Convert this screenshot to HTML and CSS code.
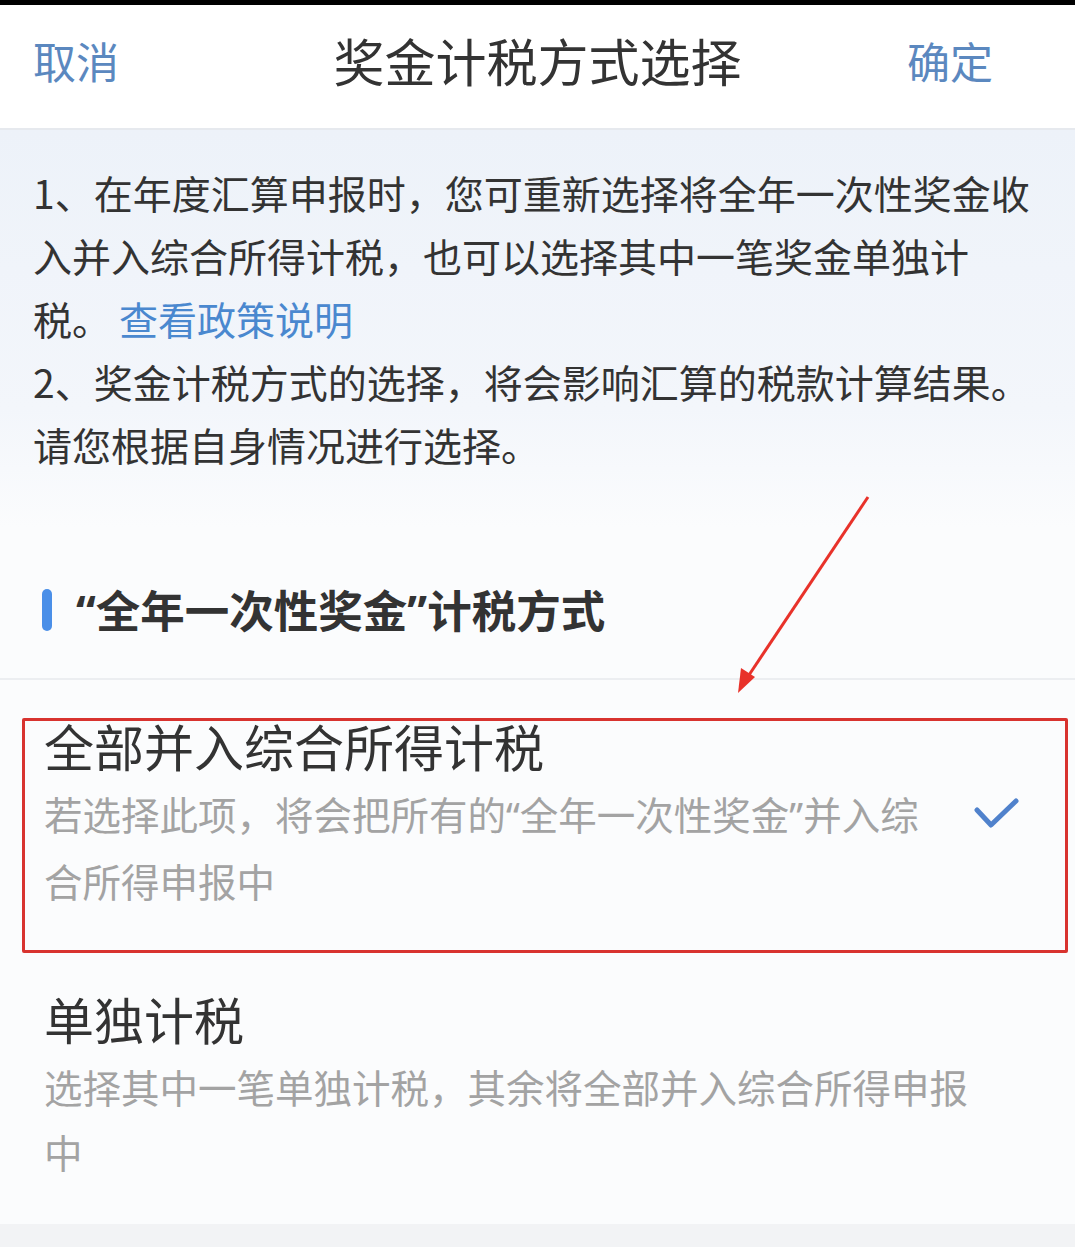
FILE: index.html
```html
<!DOCTYPE html>
<html lang="zh-CN">

<head>
    <meta charset="UTF-8">
    <meta name="viewport" content="width=device-width, initial-scale=1.0">
    <title>奖金计税方式选择</title>
    <link rel="stylesheet" href="styles.css">
</head>

<body>
    <div class="status"></div>

    <div class="header">
        <span class="action">取消</span>
        <h1 class="title">奖金计税方式选择</h1>
        <span class="action right">确定</span>
    </div>

    <div class="notice">
        <p>1、在年度汇算申报时，您可重新选择将全年一次性奖金收入并入综合所得计税，也可以选择其中一笔奖金单独计税。<a class="link">查看政策说明</a></p>
        <p>2、奖金计税方式的选择，将会影响汇算的税款计算结果。请您根据自身情况进行选择。</p>
    </div>

    <div class="section-title">
        <span class="bar"></span>
        <h2><span class="q">“</span>全年一次性奖金<span class="q">”</span>计税方式</h2>
    </div>

    <div class="options">
        <div class="option">
            <div class="opt-text">
                <div class="opt-name">全部并入综合所得计税</div>
                <div class="opt-desc">若选择此项，将会把所有的<span class="q">“</span>全年一次性奖金<span class="q">”</span>并入综合所得申报中</div>
            </div>
            <svg class="check" width="46" height="32" viewBox="0 0 46 32">
                <polyline points="3,12 17,27 42,3" fill="none" stroke="#5082cc" stroke-width="5" stroke-linecap="round" stroke-linejoin="round" />
            </svg>
        </div>
        <div class="option">
            <div class="opt-text">
                <div class="opt-name">单独计税</div>
                <div class="opt-desc">选择其中一笔单独计税，其余将全部并入综合所得申报中</div>
            </div>
        </div>
    </div>

    <div class="footer"></div>

    <!-- annotation drawn over the screenshot -->
    <div class="mark-box"></div>
    <svg class="mark-arrow" width="1075" height="1247" viewBox="0 0 1075 1247">
        <line x1="868" y1="497" x2="747" y2="678" stroke="#e8322a" stroke-width="3" />
        <polygon points="738,693 741,668 755,677" fill="#e8322a" />
    </svg>
</body>

</html>
```

FILE: styles.css
```css
body {
    margin: 0;
    font-family: "Noto Sans CJK SC", "Noto Sans", sans-serif;
    background-color: #fbfcfd;
    color: #333;
    position: relative;
    width: 1075px;
    min-height: 1247px;
    overflow: hidden;
}

.status {
    height: 5px;
    background-color: #000;
}

.header {
    height: 125px;
    display: grid;
    grid-template-columns: 1fr auto 1fr;
    align-items: center;
    padding: 0 33px 12px 33px;
    background-color: #fff;
    border-bottom: 2px solid #e6e9ee;
    box-sizing: border-box;
}

.action {
    font-size: 43px;
    color: #5b88bf;
    line-height: 1;
}

.action.right {
    justify-self: end;
    margin-right: 49px;
}

.title {
    margin: 0;
    font-size: 51px;
    font-weight: normal;
    color: #333;
    line-height: 1;
}

.notice {
    padding: 31px 38px 52px 33px;
    background: linear-gradient(#edf2f9, #f3f6fb 70%, #fbfcfd);
}

.notice p {
    margin: 0;
    font-size: 39px;
    line-height: 63px;
    color: #333;
}

.link {
    color: #4a88cf;
    margin-left: 8px;
}

.q {
    font-family: "Noto Sans", sans-serif;
}

.section-title {
    display: flex;
    align-items: center;
    height: 152px;
    padding-left: 42px;
    padding-top: 14px;
    box-sizing: border-box;
    border-bottom: 2px solid #eceef1;
}

.bar {
    width: 10px;
    height: 42px;
    border-radius: 5px;
    background-color: #4a8fe8;
    margin-right: 24px;
}

.section-title h2 {
    margin: 0;
    font-size: 44.5px;
    font-weight: bold;
    color: #333;
    line-height: 1;
}

.option {
    display: flex;
    align-items: center;
    padding: 35px 55px 40px 44px;
}

.opt-text {
    max-width: 945px;
    flex: 1;
}

.opt-name {
    font-size: 50px;
    line-height: 60px;
    color: #333;
    margin-bottom: 6px;
}

.opt-desc {
    font-size: 38.5px;
    line-height: 65px;
    color: #a3a3a3;
}

.check {
    flex-shrink: 0;
    margin-left: 40px;
}

.footer {
    height: 30px;
    background-color: #f2f3f5;
}

.mark-box {
    position: absolute;
    left: 22px;
    top: 718px;
    width: 1046px;
    height: 235px;
    border: 3px solid #d8332f;
    border-radius: 2px;
    box-sizing: border-box;
}

.mark-arrow {
    position: absolute;
    left: 0;
    top: 0;
    pointer-events: none;
}
```
